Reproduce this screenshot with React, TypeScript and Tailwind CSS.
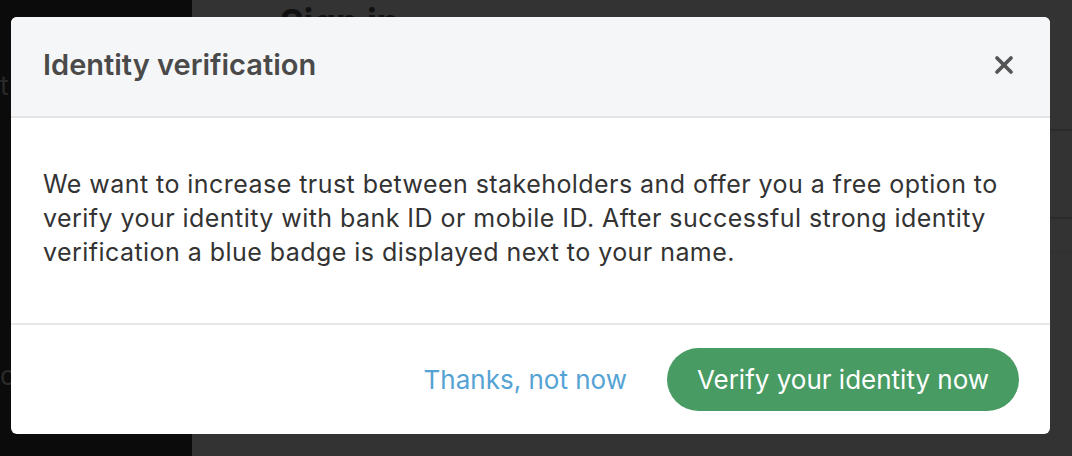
import { X } from "lucide-react";

function Backdrop() {
  return (
    <div className="flex h-[456px] w-full">
      <div className="w-[192px] shrink-0 bg-[#0b0b0b] text-[#2a2a2a]">
        <div className="pt-[66px] text-[26px] leading-[40px]">t</div>
        <div className="pt-[250px] text-[26px] leading-[40px]">c</div>
      </div>
      <div className="flex-1 bg-[#333333]">
        <div className="mt-[2px] pl-[88px] text-[36px] font-bold leading-[40px] text-[#111]">Sign in</div>
        <div className="ml-auto mt-[87px] h-[2px] w-[22px] bg-[#2b2b2b]" />
        <div className="ml-auto mt-[86px] h-[2px] w-[22px] bg-[#2b2b2b]" />
        <div className="ml-auto mt-[33px] h-px w-[22px] bg-[#2f2f2f]" />
      </div>
    </div>
  );
}

export default function App() {
  return (
    <div className="relative h-[456px] w-[1072px] overflow-hidden" style={{ fontFamily: "Inter, 'Open Sans', sans-serif" }}>
      <Backdrop />
      <div className="absolute left-[11px] top-[17px] flex h-[417px] w-[1039px] flex-col overflow-hidden rounded-[6px] bg-white">
        <div className="flex h-[101px] shrink-0 items-center justify-between border-b-2 border-[#e3e4e6] bg-[#f5f6f8] pb-[4px] pl-[32px] pr-[32px]">
          <h2 className="text-[29px] font-semibold text-[#4a4a4a]">Identity verification</h2>
          <button className="text-[#555]">
            <X size={28} strokeWidth={3.2} />
          </button>
        </div>
        <div className="h-[207px] shrink-0 border-b-2 border-[#e8e8e8] px-[32px] pt-[49px]">
          <p className="text-[25px] leading-[34px] tracking-[0.45px] text-[#333]">
            We want to increase trust between stakeholders and offer you a free option to verify your identity with bank ID or mobile ID. After successful strong identity verification a blue badge is displayed next to your name.
          </p>
        </div>
        <div className="flex flex-1 items-center justify-end gap-[40px] pr-[31px]">
          <button className="text-[26px] text-[#55a3d5]">Thanks, not now</button>
          <button className="h-[63px] w-[352px] rounded-full bg-[#489b63] text-[26px] text-white">Verify your identity now</button>
        </div>
      </div>
    </div>
  );
}
